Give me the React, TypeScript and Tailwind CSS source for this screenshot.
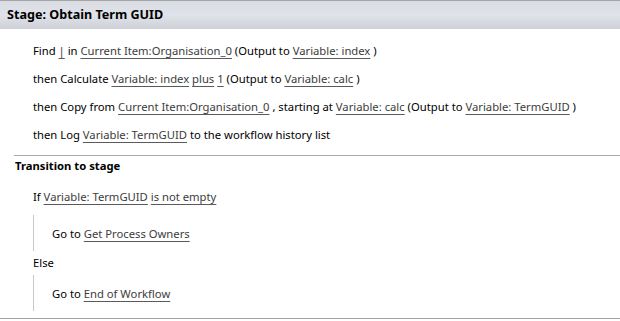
import React from "react";

const font = "font-['Segoe_UI','Noto_Sans','Open_Sans',sans-serif]";

function L({ children }: { children: React.ReactNode }) {
  return (
    <span className="text-[#3c3c3c] underline underline-offset-[3px] decoration-[#5a5a5a]">
      {children}
    </span>
  );
}

function Row({ children }: { children: React.ReactNode }) {
  return <div className="h-7 flex items-center whitespace-nowrap">{children}</div>;
}

function Branch({ children }: { children: React.ReactNode }) {
  return (
    <div className="ml-[33px] border-l border-[#c8c8c8] pt-[11px] pb-[9px] pl-[18px]">
      <div className="h-4 flex items-center whitespace-nowrap">{children}</div>
    </div>
  );
}

export default function App() {
  return (
    <div className={`w-[620px] h-[321px] bg-white text-black text-[11.25px] ${font} overflow-hidden`}>
      {/* Stage header */}
      <div className="h-[29px] border-t border-[#a4a4a4] bg-gradient-to-b from-[#d9dce2] via-[#e0e3e9] to-[#cdd1d7] flex items-center px-[7px] pt-px">
        <span className="font-bold text-[12.6px]">Stage: Obtain Term GUID</span>
      </div>

      {/* Actions */}
      <div className="pl-[33px] pt-[8px] pb-[6px]">
        <Row>
          Find&nbsp;<L>|</L>&nbsp;in&nbsp;<L>Current Item:Organisation_0</L>&nbsp;(Output to&nbsp;<L>Variable: index</L>&nbsp;)
        </Row>
        <Row>
          then Calculate&nbsp;<L>Variable: index</L>&nbsp;<L>plus</L>&nbsp;<L>1</L>&nbsp;(Output to&nbsp;<L>Variable: calc</L>&nbsp;)
        </Row>
        <Row>
          then Copy from&nbsp;<L>Current Item:Organisation_0</L>&nbsp;, starting at&nbsp;<L>Variable: calc</L>&nbsp;(Output to&nbsp;
          <L>Variable: TermGUID</L>&nbsp;)
        </Row>
        <Row>
          then Log&nbsp;<L>Variable: TermGUID</L>&nbsp;to the workflow history list
        </Row>
      </div>

      {/* Transition */}
      <div className="ml-[14px] border-t border-[#a8a8a8] pt-[2px]">
        <div className="h-[16px] flex items-center font-bold pl-px">Transition to stage</div>
      </div>
      <div className="pt-[9px]">
        <div className="pl-[33px] h-[28px] flex items-center">
          If&nbsp;<L>Variable: TermGUID</L>&nbsp;<L>is not empty</L>
        </div>
        <div className="pt-[4px]">
          <Branch>
            Go to&nbsp;<L>Get Process Owners</L>
          </Branch>
        </div>
        <div className="pl-[33px] h-[24px] flex items-center">Else</div>
        <Branch>
          Go to&nbsp;<L>End of Workflow</L>
        </Branch>
      </div>
      <div className="mt-[7px] border-t border-[#a0a0a0]" />
    </div>
  );
}
